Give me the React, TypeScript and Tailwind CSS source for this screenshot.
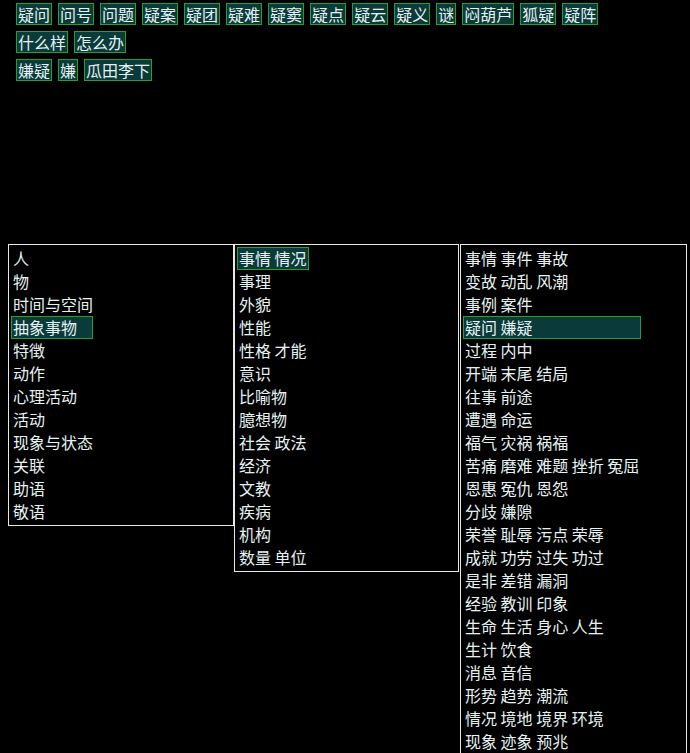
const row1 = ['疑问', '问号', '问题', '疑案', '疑团', '疑难', '疑窦', '疑点', '疑云', '疑义', '谜', '闷葫芦', '狐疑', '疑阵']
const row2 = ['什么样', '怎么办']
const row3 = ['嫌疑', '嫌', '瓜田李下']

const col1 = ['人', '物', '时间与空间', '抽象事物', '特徴', '动作', '心理活动', '活动', '现象与状态', '关联', '助语', '敬语']
const col2 = ['事情 情况', '事理', '外貌', '性能', '性格 才能', '意识', '比喻物', '臆想物', '社会 政法', '经济', '文教', '疾病', '机构', '数量 单位']
const col3 = [
  '事情 事件 事故', '变故 动乱 风潮', '事例 案件', '疑问 嫌疑', '过程 内中', '开端 末尾 结局', '往事 前途', '遭遇 命运',
  '福气 灾祸 祸福', '苦痛 磨难 难题 挫折 冤屈', '恩惠 冤仇 恩怨', '分歧 嫌隙', '荣誉 耻辱 污点 荣辱', '成就 功劳 过失 功过',
  '是非 差错 漏洞', '经验 教训 印象', '生命 生活 身心 人生', '生计 饮食', '消息 音信', '形势 趋势 潮流',
  '情况 境地 境界 环境', '现象 迹象 预兆',
]

function Tag({ text }: { text: string }) {
  return (
    <span className="border border-[#2a9d2a] bg-[#0a3a3a] px-px leading-[20px] whitespace-nowrap">{text}</span>
  )
}

function TagRow({ items }: { items: string[] }) {
  return (
    <div className="flex gap-[6px]">
      {items.map((t) => <Tag key={t} text={t} />)}
    </div>
  )
}

function Column({ items, active, activeW, w }: { items: string[]; active: number; activeW?: string; w: string }) {
  return (
    <div className={`${w} shrink-0 border border-[#e8e8e8] p-[2px]`}>
      {items.map((t, i) => (
        <div key={t} className="flex">
          <span
            className={
              i === active
                ? `border border-[#2a9d2a] bg-[#0a3a3a] px-px leading-[21px] whitespace-nowrap ${activeW ?? ''}`
                : 'border border-transparent px-px leading-[21px] whitespace-nowrap'
            }
          >
            {t}
          </span>
        </div>
      ))}
    </div>
  )
}

export default function App() {
  return (
    <div className="min-h-[753px] bg-black text-[16px] text-[#e6f2f2] overflow-hidden" style={{ fontFamily: '"Noto Sans CJK SC", "Noto Sans", sans-serif' }}>
      <div className="flex flex-col gap-[6px] pl-[16px] pt-[3px]">
        <TagRow items={row1} />
        <TagRow items={row2} />
        <TagRow items={row3} />
      </div>
      <div className="mt-[163px] ml-[8px] flex items-start">
        <Column items={col1} active={3} activeW="w-[82px]" w="w-[226px]" />
        <Column items={col2} active={0} w="w-[225px]" />
        <Column items={col3} active={3} activeW="w-[178px]" w="w-[227px] ml-px" />
      </div>
    </div>
  )
}
